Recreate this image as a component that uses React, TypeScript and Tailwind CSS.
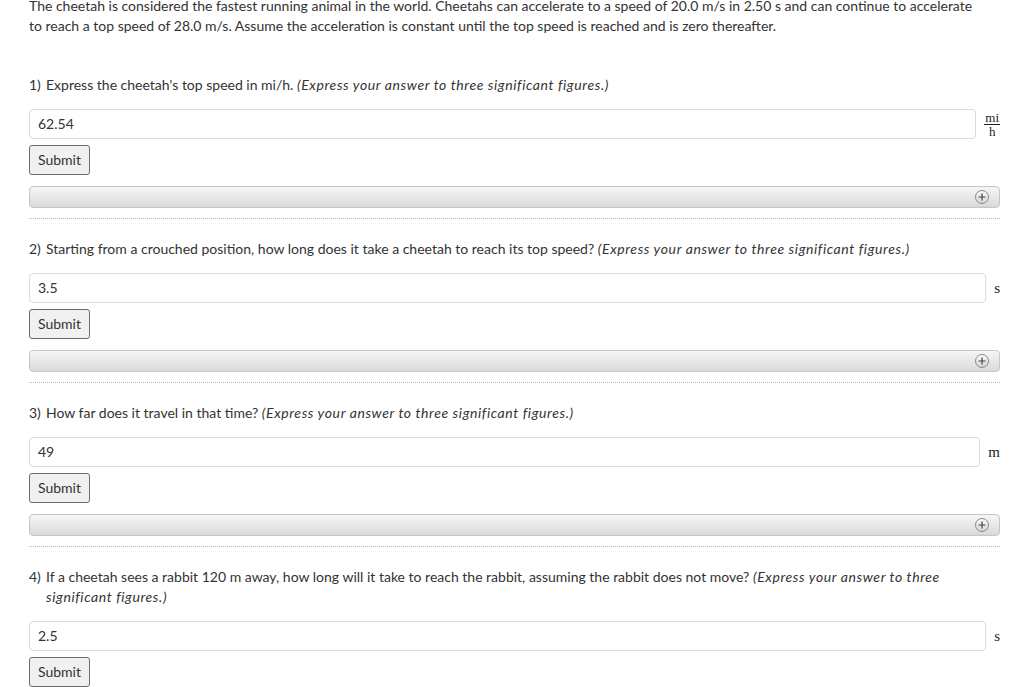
import React from 'react';

type Part = {
  num: string;
  text: React.ReactNode;
  value: string;
  unit: React.ReactNode;
  open?: boolean;
};

const serif = { fontFamily: '"Liberation Serif", "DejaVu Serif", serif' };

function Fraction() {
  return (
    <span className="inline-flex flex-col items-center text-[13px] leading-[11px] text-[#222]" style={serif}>
      <span className="px-[1px]">mi</span>
      <span className="mt-[1px] w-full border-t border-[#222]" />
      <span className="pt-[1px]">h</span>
    </span>
  );
}

function PlusCircle() {
  return (
    <svg width="16" height="16" viewBox="0 0 16 16">
      <defs>
        <linearGradient id="pc" x1="0" y1="0" x2="0" y2="1">
          <stop offset="0" stopColor="#fafafa" />
          <stop offset="1" stopColor="#d4d4d4" />
        </linearGradient>
      </defs>
      <circle cx="8" cy="8" r="6.5" fill="url(#pc)" stroke="#8a8a8a" strokeWidth="1" />
      <path d="M8 4.5v7M4.5 8h7" stroke="#444" strokeWidth="1.2" />
    </svg>
  );
}

const Hint = ({ children }: { children: React.ReactNode }) => (
  <i className="tracking-[0.6px]">{children}</i>
);

const parts: Part[] = [
  {
    num: '1)',
    text: <>Express the cheetah's top speed in mi/h. <Hint>(Express your answer to three significant figures.)</Hint></>,
    value: '62.54',
    unit: <Fraction />,
    open: true,
  },
  {
    num: '2)',
    text: <>Starting from a crouched position, how long does it take a cheetah to reach its top speed? <Hint>(Express your answer to three significant figures.)</Hint></>,
    value: '3.5',
    unit: <span className="text-[15px] leading-none text-[#222]" style={serif}>s</span>,
    open: true,
  },
  {
    num: '3)',
    text: <>How far does it travel in that time? <Hint>(Express your answer to three significant figures.)</Hint></>,
    value: '49',
    unit: <span className="text-[15px] leading-none text-[#222]" style={serif}>m</span>,
    open: true,
  },
  {
    num: '4)',
    text: <>If a cheetah sees a rabbit 120 m away, how long will it take to reach the rabbit, assuming the rabbit does not move? <Hint>(Express your answer to three<br />significant figures.)</Hint></>,
    value: '2.5',
    unit: <span className="text-[15px] leading-none text-[#222]" style={serif}>s</span>,
  },
];

function PartBlock({ p }: { p: Part }) {
  return (
    <div>
      <div className="flex">
        <span className="w-[17px] shrink-0">{p.num}</span>
        <span>{p.text}</span>
      </div>
      <div className="mt-[14px] flex items-center gap-[8px]">
        <div className="flex h-[30px] flex-1 items-center rounded-[4px] border border-[#dcdcdc] bg-white px-[8px] text-[#333]">
          {p.value}
        </div>
        <div className="flex justify-end">{p.unit}</div>
      </div>
      <button className="mt-[6px] h-[30px] rounded-[3px] border border-[#6b6b6b] bg-[#f0f0f0] px-[8px] text-[#333]">
        Submit
      </button>
      {p.open && (
        <>
          <div className="mt-[11px] flex h-[22px] items-center justify-end rounded-[4px] border border-[#c6c6c6] bg-gradient-to-b from-[#f6f6f6] to-[#d9d9d9] pr-[9px]">
            <PlusCircle />
          </div>
          <div className="mt-[10px] mb-[20px] border-t border-dotted border-[#b8b8b8]" />
        </>
      )}
    </div>
  );
}

export default function App() {
  return (
    <div
      className="min-h-screen bg-white pl-[29px] pr-[13px] text-[14px] leading-[20px] text-[#333]"
      style={{ fontFamily: 'Lato, "Noto Sans", sans-serif' }}
    >
      <p className="-mt-[4px] mb-[39px]">
        The cheetah is considered the fastest running animal in the world. Cheetahs can accelerate to a speed of 20.0 m/s in 2.50 s and can continue to accelerate
        <br />
        to reach a top speed of 28.0 m/s. Assume the acceleration is constant until the top speed is reached and is zero thereafter.
      </p>
      <div>
        {parts.map((p) => (
          <PartBlock key={p.num} p={p} />
        ))}
      </div>
    </div>
  );
}
